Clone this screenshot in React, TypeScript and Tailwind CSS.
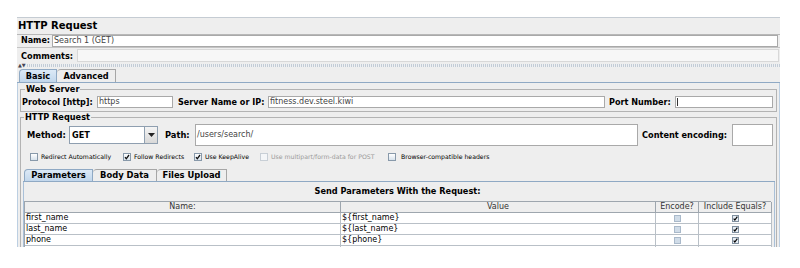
import React from 'react';

function Box({ checked, disabled }: { checked?: boolean; disabled?: boolean }) {
  return (
    <span
      className={
        disabled
          ? 'inline-flex w-[8px] h-[8px] shrink-0 border border-[#c8cfd6] bg-[#f4f6f8]'
          : 'inline-flex w-[8px] h-[8px] shrink-0 border border-[#8899aa] bg-gradient-to-b from-[#ffffff] to-[#d7e2ec]'
      }
    >
      {checked && (
        <svg viewBox="0 0 6 6" className="w-[6px] h-[6px]">
          <path d="M1 3.2 L2.3 4.8 L5 1" stroke="#111" strokeWidth="1.3" fill="none" />
        </svg>
      )}
    </span>
  );
}

function CellBox({ checked }: { checked?: boolean }) {
  return (
    <span
      className={
        checked
          ? 'inline-flex w-[7px] h-[7px] border border-[#7f8f9f] bg-[#e6edf4] items-center justify-center'
          : 'inline-flex w-[7px] h-[7px] border border-[#a9b9ca] bg-[#d0dce8]'
      }
    >
      {checked && (
        <svg viewBox="0 0 6 6" className="w-[5px] h-[5px]">
          <path d="M0.8 3.2 L2.2 4.8 L5.2 0.8" stroke="#000" strokeWidth="1.4" fill="none" />
        </svg>
      )}
    </span>
  );
}

const params = [
  { name: 'first_name', value: '${first_name}' },
  { name: 'last_name', value: '${last_name}' },
  { name: 'phone', value: '${phone}' },
];

export default function App() {
  return (
    <div className="w-[800px] h-[268px] bg-white pt-[17px] pl-[17px] font-['DejaVu_Sans',sans-serif] text-black">
      <div className="w-[763px] h-[230px] bg-[#eeeeee] border-t border-[#c5ccd3] overflow-hidden flex flex-col">
        {/* title */}
        <div className="h-[17px] shrink-0 border-b border-[#b8b8b8] flex items-center pl-[1px] text-[10px] font-bold leading-none">
          HTTP Request
        </div>

        {/* name */}
        <div className="h-[12px] shrink-0 flex items-center">
          <span className="w-[35px] pl-[4px] text-[8px] font-bold leading-none whitespace-nowrap">Name:</span>
          <div className="w-[726px] h-[12px] bg-white border border-[#a9a9a9] flex items-center pl-[1px] text-[8px] leading-none text-[#444]">
            Search 1 (GET)
          </div>
        </div>

        {/* comments */}
        <div className="h-[15px] shrink-0 border-t border-[#c4c4c4] flex items-center">
          <span className="w-[60px] pl-[4px] pt-[3px] text-[8.2px] font-bold leading-none whitespace-nowrap">Comments:</span>
          <div className="flex-1 mr-[1px] h-[13px] mt-[1px] bg-[#f7f7f7] border border-[#d8d8d8]" />
        </div>

        {/* splitter */}
        <div className="h-[6px] shrink-0 flex items-center">
          <span className="pl-[1px] pr-[1px] text-[5px] leading-none text-[#445]">▲▼</span>
          <div className="flex-1 h-[3px] bg-[repeating-linear-gradient(90deg,#c3ccd6_0px,#c3ccd6_1px,#eef0f2_1px,#eef0f2_2px)]" />
        </div>

        {/* main tabs */}
        <div className="h-[15px] shrink-0 flex items-end pl-[2px] border-b border-[#8fa9c4]">
          <div className="w-[38px] h-[13px] flex items-center justify-center rounded-tl-[4px] border border-b-0 border-[#8fa9c4] bg-gradient-to-b from-[#dce9f6] to-[#c2d7ec] text-[8.2px] font-bold leading-none">
            Basic
          </div>
          <div className="w-[59px] h-[13px] flex items-center justify-center rounded-tl-[4px] border border-b-0 border-l-0 border-[#a6a6a6] bg-[#eeeeee] text-[8.2px] font-bold leading-none">
            Advanced
          </div>
        </div>

        {/* tab content */}
        <div className="shrink-0 border-x border-[#bccfe2] pt-[2px] px-[2px]">
          {/* web server */}
          <fieldset className="border border-[#b3b3b3] pb-[3px]">
            <legend className="ml-[4px] px-[1px] text-[8.2px] font-bold leading-[8px]">Web Server</legend>
            <div className="flex items-center h-[12px] mt-[3px] text-[8px] leading-none">
              <span className="w-[76px] pl-[1px] text-[8.1px] font-bold whitespace-nowrap">Protocol [http]:</span>
              <div className="w-[76px] h-[12px] bg-white border border-[#a9a9a9] flex items-center pl-[1px] text-[#444]">https</div>
              <span className="ml-[5px] w-[90px] text-[8.1px] font-bold whitespace-nowrap">Server Name or IP:</span>
              <div className="w-[337px] h-[12px] bg-white border border-[#a9a9a9] flex items-center pl-[1px] text-[#444]">
                fitness.dev.steel.kiwi
              </div>
              <span className="ml-[4px] w-[66px] text-[8.1px] font-bold whitespace-nowrap">Port Number:</span>
              <div className="w-[98px] h-[12px] bg-white border border-[#a9a9a9] flex items-center pl-[1px]">
                <span className="w-[1px] h-[8px] bg-[#333]" />
              </div>
            </div>
          </fieldset>

          {/* http request */}
          <fieldset className="mt-[1px] border border-[#b3b3b3] pb-[40px]">
            <legend className="ml-[3px] px-[1px] text-[8.2px] font-bold leading-[8px]">HTTP Request</legend>
            <div className="flex items-center h-[22px] mt-[3px] text-[8px] leading-none">
              <span className="w-[48px] pl-[6px] text-[8.3px] font-bold">Method:</span>
              <div className="w-[89px] h-[18px] flex border border-[#8f9fb0] bg-white">
                <span className="flex-1 flex items-center pl-[2px] text-[8.2px] font-bold">GET</span>
                <span className="w-[13px] flex items-center justify-center border-l border-[#8f9fb0] bg-gradient-to-b from-[#f4f4f4] to-[#d8d8d8]">
                  <svg viewBox="0 0 7 4" className="w-[7px] h-[4px]">
                    <path d="M0 0 H7 L3.5 4 Z" fill="#222" />
                  </svg>
                </span>
              </div>
              <span className="ml-[7px] w-[30px] text-[8.3px] font-bold">Path:</span>
              <div className="w-[443px] h-[22px] bg-white border border-[#a9a9a9] flex items-center pl-[1px] text-[#444]">
                /users/search/
              </div>
              <span className="ml-[4px] w-[90px] text-[8.2px] font-bold whitespace-nowrap">Content encoding:</span>
              <div className="w-[41px] h-[22px] bg-white border border-[#a9a9a9]" />
            </div>

            {/* options */}
            <div className="flex items-center h-[12px] mt-[5px] pl-[9px] text-[6.2px] leading-none">
              <div className="w-[93px] flex items-center gap-[3px]">
                <Box />
                <span>Redirect Automatically</span>
              </div>
              <div className="w-[71px] flex items-center gap-[3px]">
                <Box checked />
                <span>Follow Redirects</span>
              </div>
              <div className="w-[66px] flex items-center gap-[3px]">
                <Box checked />
                <span>Use KeepAlive</span>
              </div>
              <div className="w-[128px] flex items-center gap-[3px] text-[#9a9a9a]">
                <Box disabled />
                <span>Use multipart/form-data for POST</span>
              </div>
              <div className="flex items-center gap-[5px]">
                <Box />
                <span>Browser-compatible headers</span>
              </div>
            </div>

            {/* parameter tabs */}
            <div className="ml-[2px] w-[752px] mt-[6px]">
              <div className="h-[13px] flex items-end pl-[1px] border-b border-[#8fa9c4]">
                <div className="w-[69px] h-[12px] flex items-center justify-center rounded-tl-[4px] border border-b-0 border-[#8fa9c4] bg-gradient-to-b from-[#dce9f6] to-[#c2d7ec] text-[8.4px] font-bold leading-none">
                  Parameters
                </div>
                <div className="w-[64px] h-[12px] flex items-center justify-center rounded-tl-[4px] border border-b-0 border-l-0 border-[#a6a6a6] text-[8.4px] font-bold leading-none">
                  Body Data
                </div>
                <div className="w-[70px] h-[12px] flex items-center justify-center rounded-tl-[4px] border border-b-0 border-l-0 border-[#a6a6a6] text-[8.4px] font-bold leading-none">
                  Files Upload
                </div>
              </div>
              <div className="border-x border-[#a9c0d8] pr-[3px]">
                <div className="h-[19px] w-[747px] flex items-center justify-center text-[8.2px] font-bold leading-none">
                  Send Parameters With the Request:
                </div>
                <div className="w-[747px] grid grid-cols-[316px_315px_43px_73px] border-t border-l border-[#9ea6ae] text-[8px] leading-none">
                  {['Name:', 'Value', 'Encode?', 'Include Equals?'].map((h) => (
                    <div
                      key={h}
                      className="h-[11px] flex items-center justify-center bg-[#eeeeee] border-r border-b border-[#9ea6ae] text-[#333]"
                    >
                      {h}
                    </div>
                  ))}
                  {params.map((p) => (
                    <React.Fragment key={p.name}>
                      <div className="h-[11px] flex items-center pl-[1px] bg-white border-r border-b border-[#b9c0c7]">{p.name}</div>
                      <div className="h-[11px] flex items-center pl-[1px] bg-white border-r border-b border-[#b9c0c7]">{p.value}</div>
                      <div className="h-[11px] flex items-center justify-center bg-white border-r border-b border-[#b9c0c7]">
                        <CellBox />
                      </div>
                      <div className="h-[11px] flex items-center justify-center bg-white border-r border-b border-[#b9c0c7]">
                        <CellBox checked />
                      </div>
                    </React.Fragment>
                  ))}
                  <div className="h-[11px] bg-white border-r border-[#b9c0c7]" />
                  <div className="h-[11px] bg-white border-r border-[#b9c0c7]" />
                  <div className="h-[11px] bg-white border-r border-[#b9c0c7]" />
                  <div className="h-[11px] bg-white border-r border-[#b9c0c7]" />
                </div>
              </div>
            </div>
          </fieldset>
        </div>
      </div>
    </div>
  );
}
